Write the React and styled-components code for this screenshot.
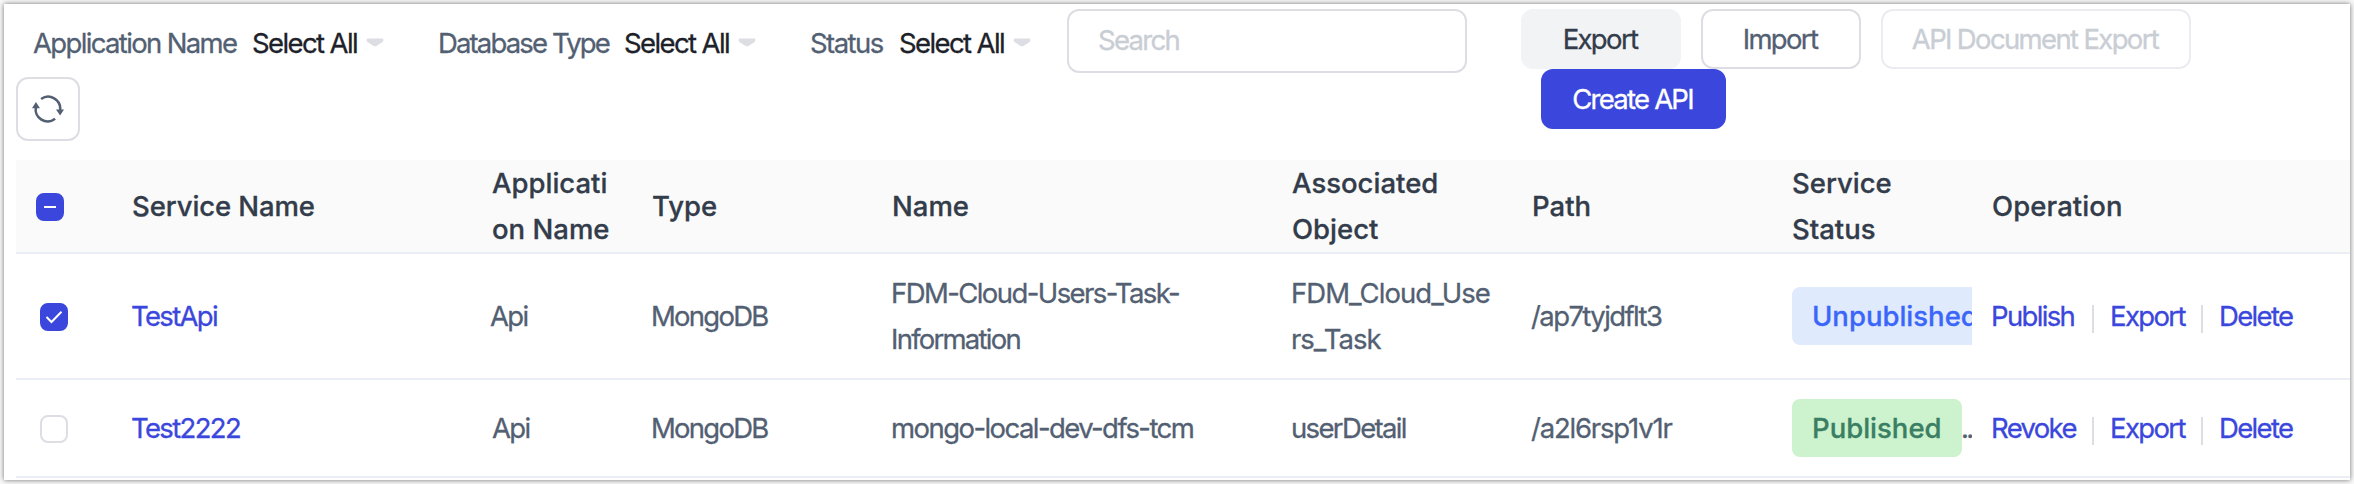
import React from 'react';
import styled, { createGlobalStyle } from 'styled-components';

const GlobalStyle = createGlobalStyle`
  * { box-sizing: border-box; }
  body {
    margin: 0;
    background: #f8f8f8;
    font-family: Inter, "Liberation Sans", sans-serif;
    font-size: 27.5px;
    color: #535f72;
    -webkit-text-stroke: 0.3px currentColor;
  }
`;

const Page = styled.div`
  width: 2354px;
  height: 484px;
  padding: 4px;
  overflow: hidden;
`;

const Panel = styled.main`
  width: 2346px;
  height: 476px;
  padding: 5px 0 0 12px;
  background: #fff;
  box-shadow: 0 0 5px rgba(0, 0, 0, 0.55);
`;

const Toolbar = styled.header`
  display: flex;
  height: 151px;
`;

const FilterArea = styled.div`
  width: 1505px;
  display: flex;
  flex-direction: column;
  gap: 4px;
`;

const FilterRow = styled.div`
  display: flex;
  align-items: center;
  height: 64px;
  padding-left: 17px;
`;

const Filter = styled.div`
  display: flex;
  align-items: center;
  flex: none;
  width: ${(p) => p.$width}px;
  padding-top: 4px;
  white-space: nowrap;
`;

const Text = styled.span`
  display: block;
  white-space: nowrap;
  letter-spacing: ${(p) => p.$track ?? -1.65}px;
`;

const FilterLabel = styled(Text)`
  flex: none;
  width: ${(p) => p.$width}px;
`;

const FilterValue = styled(Text)`
  flex: none;
  width: 114px;
  color: #1d2129;
`;

const SearchBox = styled.div`
  display: flex;
  align-items: center;
  width: 400px;
  height: 64px;
  padding: 0 29px 2px;
  border: 2px solid #dddee4;
  border-radius: 12px;
  color: #c9cdd4;
`;

const RefreshButton = styled.button`
  display: flex;
  align-items: center;
  justify-content: center;
  width: 64px;
  height: 64px;
  padding: 0;
  background: #fff;
  border: 2px solid #dddee4;
  border-radius: 12px;
`;

const Actions = styled.div`
  display: flex;
  flex-wrap: wrap;
  align-content: flex-start;
  column-gap: 20px;
  width: 700px;
`;

const Button = styled.button`
  display: flex;
  align-items: center;
  justify-content: center;
  width: ${(p) => p.$width}px;
  height: 60px;
  padding: 0 2px 1px 0;
  font: inherit;
  border-radius: 12px;
  border: 2px solid #dddee4;
  background: #fff;
  color: #535f72;
`;

const SoftButton = styled(Button)`
  background: #f2f3f5;
  border-color: #f2f3f5;
  color: #333c4a;
`;

const DisabledButton = styled(Button)`
  border-color: #ebecf2;
  color: #c9cdd4;
`;

const PrimaryButton = styled(Button)`
  margin-left: 20px;
  background: #3b47dc;
  border-color: #3b47dc;
  color: #fff;
`;

const Row = styled.div`
  display: grid;
  grid-template-columns: 96px 360px 160px 240px 400px 240px 260px 200px 1fr;
  align-items: center;
  height: ${(p) => p.$height}px;
  line-height: 46px;
  border-bottom: 2px solid #ebeef5;
`;

const HeadRow = styled(Row)`
  background: #fafafa;
  color: #333c4a;
  font-weight: 500;
`;

const Cell = styled.div`
  padding-left: 20px;
  min-width: 0;
  overflow: hidden;
`;

const TextCell = styled(Cell)`
  padding-left: ${(p) => p.$inset ?? 19}px;
`;

const CheckCell = styled(Cell)`
  padding-left: ${(p) => (p.$head ? 20 : 24)}px;
`;

const Link = styled(Text)`
  color: #3b47dc;
`;

const Check = styled.span`
  display: flex;
  align-items: center;
  justify-content: center;
  width: 28px;
  height: 28px;
  margin-top: 2px;
  border-radius: 8px;
  border: 2px solid ${(p) => (p.$on ? '#3b47dc' : '#dddee4')};
  background: ${(p) => (p.$on ? '#3b47dc' : '#fff')};
`;

const StatusClip = styled.div`
  display: flex;
  align-items: center;
  width: 180px;
  overflow: hidden;
`;

const Tag = styled.span`
  display: flex;
  flex: none;
  align-items: center;
  height: 58px;
  width: ${(p) => p.$width}px;
  padding-left: 20px;
  border-radius: 8px;
  font-weight: 500;
  color: ${(p) => (p.$live ? '#3a7f63' : '#3b66fa')};
  background: ${(p) => (p.$live ? '#ccf2ce' : '#dfeafd')};
`;

const Ellipsis = styled(Text)`
  margin-left: -1px;
`;

const Operations = styled.div`
  display: flex;
  align-items: center;
`;

const Operation = styled(Link)`
  flex: none;
  width: ${(p) => p.$width}px;
`;

const Divider = styled.i`
  width: 2px;
  height: 28px;
  margin: 6px 16px 0 0;
  background: #dddee4;
`;

const Caret = () => (
  <svg width="18" height="10" viewBox="0 0 18 10">
    <path d="M1.5 0.5H16.5Q17.6 0.8 17.3 2.6L16.6 4L10.8 7.8Q9 8.9 7.2 7.8L1.4 4L0.7 2.6Q0.4 0.8 1.5 0.5Z" fill="#dddee4" />
  </svg>
);

const RefreshIcon = () => (
  <svg width="34" height="30" viewBox="0 0 34 30">
    <g fill="none" stroke="#535f72" strokeWidth="2.6">
      <path d="M10.1 5A12 12 0 0 1 29.1 16" />
      <path d="M24.1 24.8A12 12 0 0 1 4.9 13" />
    </g>
    <path d="M25 15.6H33L29.1 21.4ZM1 14.2H9L4.9 8Z" fill="#535f72" />
  </svg>
);

const filters = [
  { label: 'Application Name', labelWidth: 219, width: 405, track: -1.65 },
  { label: 'Database Type', labelWidth: 186, width: 372, track: -1.85 },
  { label: 'Status', labelWidth: 89, width: 257, track: -1.55 },
];

const columns = [
  [['Service Name'], -0.1],
  [['Applicati', 'on Name'], 0],
  [['Type'], 0],
  [['Name'], 0],
  [['Associated', 'Object'], 0],
  [['Path'], 0],
  [['Service', 'Status'], 0],
  [['Operation'], 0.1],
];

const rows = [
  {
    service: 'TestApi', app: 'Api', appInset: 18, type: 'MongoDB',
    name: [['FDM-Cloud-Users-Task-', -1.58], ['Information', -1.75]],
    object: [['FDM_Cloud_Use', -0.95], ['rs_Task', -1]],
    path: ['/ap7tyjdflt3', -1.6], live: false, action: 'Publish', height: 126, checked: true,
  },
  {
    service: 'Test2222', app: 'Api', appInset: 20, type: 'MongoDB',
    name: [['mongo-local-dev-dfs-tcm', -1.56]],
    object: [['userDetail', -1.65]],
    path: ['/a2l6rsp1v1r', -1.2], live: true, action: 'Revoke', height: 98, checked: false,
  },
];

const Lines = ({ lines }) => lines.map(([t, track]) => <Text key={t} $track={track}>{t}</Text>);

export default function App() {
  return (
    <Page>
      <GlobalStyle />
      <Panel>
        <Toolbar>
          <FilterArea>
            <FilterRow>
              {filters.map((f) => (
                <Filter key={f.label} $width={f.width}>
                  <FilterLabel $width={f.labelWidth} $track={f.track}>{f.label}</FilterLabel>
                  <FilterValue $track={-1.6}>Select All</FilterValue>
                  <Caret />
                </Filter>
              ))}
              <SearchBox><Text $track={-1.7}>Search</Text></SearchBox>
            </FilterRow>
            <RefreshButton><RefreshIcon /></RefreshButton>
          </FilterArea>
          <Actions>
            <SoftButton $width={160}><Text>Export</Text></SoftButton>
            <Button $width={160}><Text>Import</Text></Button>
            <DisabledButton $width={310}><Text>API Document Export</Text></DisabledButton>
            <PrimaryButton $width={185}><Text $track={-1.75}>Create API</Text></PrimaryButton>
          </Actions>
        </Toolbar>
        <HeadRow $height={94}>
          <CheckCell $head>
            <Check $on>
              <svg width="12" height="2" viewBox="0 0 12 2"><rect width="12" height="2" fill="#fff" /></svg>
            </Check>
          </CheckCell>
          {columns.map(([lines, track]) => (
            <Cell key={lines[0]}><Lines lines={lines.map((t) => [t, track])} /></Cell>
          ))}
        </HeadRow>
        {rows.map((r) => (
          <Row key={r.service} $height={r.height}>
            <CheckCell>
              <Check $on={r.checked}>
                {r.checked && (
                  <svg width="18" height="14" viewBox="0 0 18 14">
                    <path d="M1.5 7L6.5 12L16.5 1.8" fill="none" stroke="#fff" strokeWidth="2" />
                  </svg>
                )}
              </Check>
            </CheckCell>
            <TextCell><Link>{r.service}</Link></TextCell>
            <TextCell $inset={r.appInset}><Text>{r.app}</Text></TextCell>
            <TextCell><Text $track={-1.75}>{r.type}</Text></TextCell>
            <TextCell><Lines lines={r.name} /></TextCell>
            <TextCell><Lines lines={r.object} /></TextCell>
            <TextCell><Text $track={r.path[1]}>{r.path[0]}</Text></TextCell>
            <Cell>
              <StatusClip>
                <Tag $live={r.live} $width={r.live ? 170 : 204}>
                  <Text $track={0}>{r.live ? 'Published' : 'Unpublished'}</Text>
                </Tag>
                {r.live && <Ellipsis $track={-2.7}>..</Ellipsis>}
              </StatusClip>
            </Cell>
            <TextCell>
              <Operations>
                <Operation $width={101}>{r.action}</Operation>
                <Divider />
                <Operation $width={91}>Export</Operation>
                <Divider />
                <Operation $width={90}>Delete</Operation>
              </Operations>
            </TextCell>
          </Row>
        ))}
      </Panel>
    </Page>
  );
}
